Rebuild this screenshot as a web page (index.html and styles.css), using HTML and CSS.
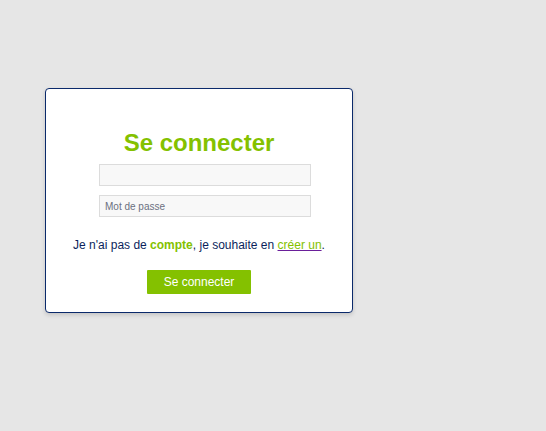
FILE: index.html
```html
<!DOCTYPE html>
<html lang="fr">
<head>
<meta charset="utf-8">
<title>Se connecter</title>
<link rel="stylesheet" href="styles.css">
</head>
<body>
<form class="card">
  <h1 class="title">Se connecter</h1>
  <input class="field" type="text">
  <input class="field" type="password" placeholder="Mot de passe">
  <p class="note">Je n'ai pas de <span class="accent">compte</span>, je souhaite en <a class="link" href="#"><span class="link-text">créer un</span></a>.</p>
  <button class="btn" type="button">Se connecter</button>
</form>
</body>
</html>
```
FILE: styles.css
```css
html, body {
  margin: 0;
  padding: 0;
}
body {
  background: #e6e6e6;
  font-family: "Liberation Sans", Arial, sans-serif;
  padding: 88px 0 0 45px;
  height: 431px;
  box-sizing: border-box;
}
.card {
  width: 308px;
  height: 225px;
  box-sizing: border-box;
  background: #fff;
  border: 1px solid #0b2a6b;
  border-radius: 4px;
  box-shadow: 0 2px 4px rgba(0,0,0,0.15);
  display: flex;
  flex-direction: column;
  align-items: center;
  padding-top: 40px;
}
.title {
  margin: 0;
  font-size: 24px;
  font-weight: bold;
  color: #84c100;
  line-height: 28px;
}
.field {
  width: 212px;
  height: 22px;
  box-sizing: border-box;
  background: #f8f8f8;
  border: 1px solid #dcdcdc;
  border-radius: 0;
  margin: 0 0 0 12px;
  padding: 0 5px;
  font-family: "Liberation Sans", Arial, sans-serif;
  font-size: 10px;
  outline: none;
}
.field + .field {
  margin-top: 9px;
}
.title + .field {
  margin-top: 7px;
}
.field::placeholder {
  color: #6b7080;
}
.note {
  margin: 21px 0 0;
  font-size: 12px;
  line-height: 14px;
  color: #0b1f5c;
}
.accent {
  color: #84c100;
  font-weight: bold;
}
.link {
  color: #6a1f9a;
  text-decoration: underline;
  text-decoration-color: #6a1f9a;
}
.link-text {
  color: #84c100;
}
.btn {
  margin-top: 18px;
  width: 104px;
  height: 24px;
  background: #84c100;
  border: none;
  border-radius: 1px;
  color: #fff;
  font-family: "Liberation Sans", Arial, sans-serif;
  font-size: 12px;
  padding: 0;
}
```
